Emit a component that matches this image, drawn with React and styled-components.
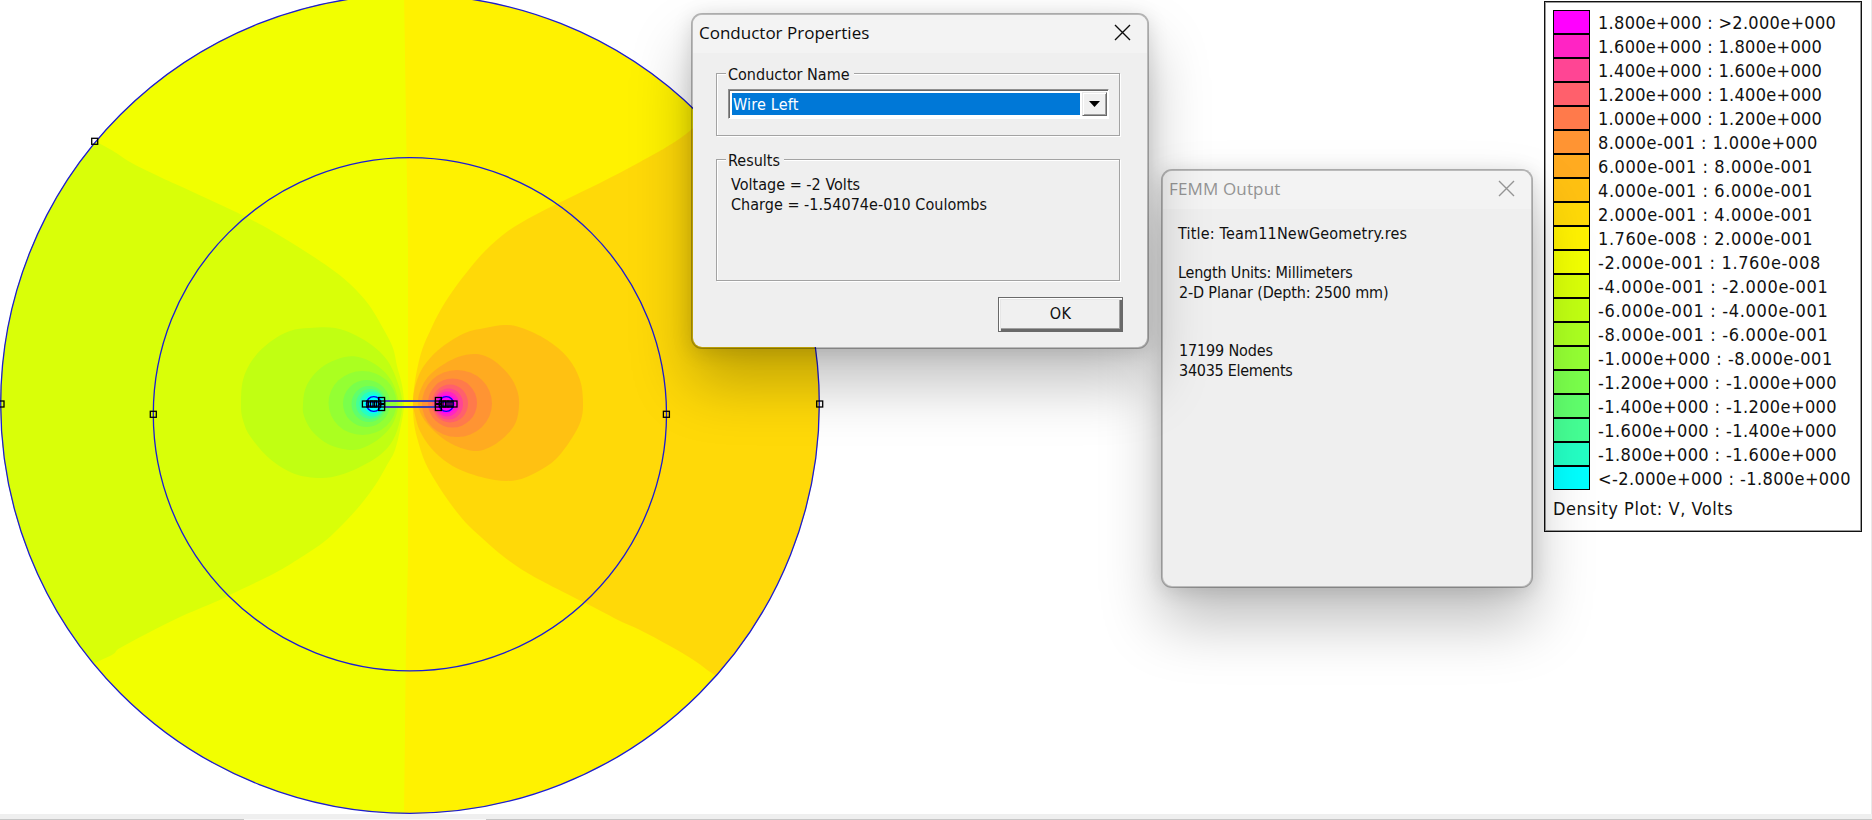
import React from "react";
import styled, { createGlobalStyle } from "styled-components";

const GlobalStyle = createGlobalStyle`
  * { box-sizing: border-box; }
  body { margin: 0; background: #fff; overflow: hidden; }
`;

const ui = '"DejaVu Sans Condensed", "DejaVu Sans", sans-serif';

/* ---------- page ---------- */

const Page = styled.div`
  position: relative;
  display: flex;
  flex-direction: column;
  width: 1872px;
  height: 820px;
  overflow: hidden;
  background: #fff;
  color: #111;
  font: 16px ${ui};
`;

const Workspace = styled.main`
  display: flex;
  justify-content: space-between;
  align-items: flex-start;
  height: 814px;
  border-right: 1px solid #e9e9e9;
`;

const Plot = styled.svg`
  display: block;
  flex: none;
`;

const StatusStrip = styled.footer`
  display: flex;
  height: 6px;
  background: #efefef;
`;

const StripSegment = styled.div`
  flex: ${(p) => (p.$width ? `0 0 ${p.$width}px` : "1")};
  border-bottom: 1px solid ${(p) => (p.$gap ? "#f8f8f8" : "#c6c6c6")};
`;

/* ---------- legend ---------- */

const LegendPanel = styled.aside`
  width: 318px;
  height: 531px;
  margin: 1px 9px 0 0;
  padding: 8px 0 0 8px;
  border: 1px solid #111;
  box-shadow: inset 0 0 0 1px #9a9a9a;
  background: #fff;
  font-size: 18px;
`;

const LegendRow = styled.div`
  display: flex;
  align-items: center;
  height: 24px;
  white-space: pre;
`;

const Swatch = styled.span`
  flex: none;
  width: 37px;
  height: 24px;
  margin-right: 8px;
  border: 1px solid #000;
  background: ${(p) => p.$color};
`;

const RangeText = styled.span`
  letter-spacing: ${(p) => p.$spacing}px;
`;

const LegendTitle = styled.div`
  margin-top: 7px;
  line-height: 24px;
  letter-spacing: 0.55px;
`;

/* ---------- windows ---------- */

const Window = styled.section`
  position: absolute;
  left: ${(p) => p.$x}px;
  top: ${(p) => p.$y}px;
  width: ${(p) => p.$w}px;
  height: ${(p) => p.$h}px;
  display: flex;
  flex-direction: column;
  border: 2px solid rgba(0, 0, 0, 0.27);
  border-radius: 11px;
  background: #efefef;
  background-clip: padding-box;
  box-shadow: 0 34px 60px rgba(0, 0, 0, 0.25), 0 3px 20px rgba(0, 0, 0, 0.13);
`;

const TitleBar = styled.header`
  flex: none;
  display: flex;
  align-items: center;
  justify-content: space-between;
  height: 38px;
  padding: 0 16px 4px 6px;
  border-radius: 9px 9px 0 0;
  background: #f3f3f3;
  color: ${(p) => (p.$inactive ? "#949494" : "#0c0c0c")};
  font: 17px "Open Sans", "Noto Sans", sans-serif;
  letter-spacing: ${(p) => (p.$inactive ? 0.15 : 0)}px;
`;

const CloseIcon = styled.svg`
  width: 17px;
  height: 17px;
  fill: none;
  stroke: currentColor;
  stroke-width: 1.4;
`;

const DialogBody = styled.div`
  display: flex;
  flex-direction: column;
  padding: 20px 27px 0 23px;
`;

const Group = styled.fieldset`
  position: relative;
  min-width: 0;
  width: 404px;
  height: ${(p) => p.$h}px;
  margin: 0 0 ${(p) => p.$gap}px;
  padding: ${(p) => p.$pad};
  border: 1px solid #a3a3a3;
  box-shadow: 1px 1px 0 #fff, inset 1px 1px 0 #fff;
`;

const GroupLabel = styled.span`
  position: absolute;
  top: -10px;
  left: 9px;
  padding: 0 4px 0 2px;
  background: #efefef;
  line-height: 21px;
  white-space: nowrap;
`;

const Combo = styled.div`
  display: flex;
  width: 381px;
  height: 30px;
  padding: 2px 1px 2px 2px;
  border: 1px solid;
  border-color: #8f8f8f #fff #fff #8f8f8f;
  box-shadow: inset 1px 1px 0 #6a6a6a;
  background: #fff;
`;

const ComboValue = styled.span`
  flex: 1;
  margin: 1px 2px 1px 1px;
  padding-left: 1px;
  background: #0078d7;
  color: #fff;
  line-height: 24px;
  letter-spacing: 0.2px;
`;

const ComboButton = styled.button`
  display: flex;
  align-items: center;
  justify-content: center;
  width: 25px;
  padding: 0;
  border: 1px solid;
  border-color: #e8e8e8 #696969 #696969 #e8e8e8;
  box-shadow: inset 1px 1px 0 #fff, inset -1px -1px 0 #a0a0a0;
  background: #f0f0f0;
`;

const ResultLine = styled.div`
  line-height: 19.6px;
  letter-spacing: 0.03px;
  white-space: nowrap;
`;

const OkButton = styled.button`
  align-self: flex-end;
  width: 125px;
  height: 35px;
  margin-right: -3px;
  padding: 0 0 2px;
  border: 1px solid #696969;
  box-shadow: inset 1px 1px 0 #fff, inset 2px 2px 0 #e6e6e6, inset -2px -2px 0 #696969,
    inset -3px -3px 0 #a0a0a0;
  background: #f0f0f0;
  color: #111;
  font: 16px ${ui};
  letter-spacing: 0.4px;
`;

const OutputBody = styled.div`
  padding: 15px 15px 0;
`;

const OutputLine = styled.div`
  height: 19.5px;
  padding-left: ${(p) => p.$indent || 0}px;
  line-height: 19.5px;
  letter-spacing: ${(p) => p.$spacing || 0}px;
  white-space: nowrap;
`;

/* ---------- data ---------- */

const legend = [
  ["#ff00ff", "1.800e+000 : >2.000e+000"],
  ["#ff24c4", "1.600e+000 : 1.800e+000"],
  ["#ff4594", "1.400e+000 : 1.600e+000"],
  ["#ff606c", "1.200e+000 : 1.400e+000"],
  ["#ff7a4b", "1.000e+000 : 1.200e+000"],
  ["#ff9433", "8.000e-001 : 1.000e+000"],
  ["#ffab20", "6.000e-001 : 8.000e-001"],
  ["#ffc112", "4.000e-001 : 6.000e-001"],
  ["#ffd908", "2.000e-001 : 4.000e-001"],
  ["#fff200", "1.760e-008 : 2.000e-001"],
  ["#f2ff00", "-2.000e-001 : 1.760e-008"],
  ["#d9ff08", "-4.000e-001 : -2.000e-001"],
  ["#c1ff12", "-6.000e-001 : -4.000e-001"],
  ["#abff20", "-8.000e-001 : -6.000e-001"],
  ["#94ff33", "-1.000e+000 : -8.000e-001"],
  ["#7aff4b", "-1.200e+000 : -1.000e+000"],
  ["#60ff6c", "-1.400e+000 : -1.200e+000"],
  ["#45ff94", "-1.600e+000 : -1.400e+000"],
  ["#24ffc4", "-1.800e+000 : -1.600e+000"],
  ["#00ffff", "<-2.000e+000 : -1.800e+000"],
];

const spacingFor = (text) => {
  const exponents = (text.match(/e-/g) || []).length;
  const signs = (text.match(/-/g) || []).length - exponents;
  return 0.3 + 0.14 * exponents + 0.05 * signs;
};

const contours = [
  {
    color: "#d9ff08",
    points: [[95,141],[130,162],[160,177],[195,193],[240,214],[272,231],[303,250],[330,268],[350,284],[369,305],[384,330],[393,348],[397,366],[402,385],[404,405],[401,425],[395,450],[387,465],[376,484],[362,503],[345,522],[325,541],[300,558],[275,573],[240,590],[215,602],[180,617],[148,633],[120,648],[94,663],[-60,720],[-60,60]],
  },
  {
    color: "#ffd908",
    points: [[715,675],[695,661],[670,646],[640,630],[620,621],[597,609],[575,598],[540,580],[518,567],[499,553],[482,538],[466,523],[450,503],[436,482],[425,462],[418,441],[414,423],[413,400],[416,375],[422,350],[431,329],[440,311],[452,292],[467,272],[485,251],[508,231],[535,215],[565,200],[600,183],[640,162],[682,137],[760,80],[900,60],[900,740],[760,700]],
  },
  {
    color: "#c1ff12",
    points: [[241,405],[243,380],[253,359],[270,342],[290,331],[310,328],[335,328],[355,335],[373,346],[387,360],[396,378],[402,400],[400,420],[393,440],[380,455],[360,467],[340,475],[320,478],[295,474],[270,459],[250,436],[243,420]],
  },
  {
    color: "#abff20",
    points: [[303,405],[305,390],[312,377],[325,365],[345,357],[362,358],[379,367],[391,380],[397,395],[398,408],[392,425],[380,438],[365,447],[350,450],[328,444],[312,431],[304,416]],
  },
  {
    color: "#ffc112",
    points: [[413,400],[417,380],[426,363],[442,347],[465,333],[485,328],[505,325],[522,328],[547,340],[568,358],[580,380],[583,402],[581,420],[572,438],[556,459],[537,472],[517,480],[495,480],[468,473],[448,463],[431,448],[420,431],[415,415]],
  },
  {
    color: "#ffab20",
    points: [[418,400],[425,381],[438,368],[458,357],[477,354],[493,360],[509,375],[517,390],[519,405],[515,424],[501,440],[483,450],[468,450],[450,443],[434,431],[422,416]],
  },
];

const rings = [
  ["#94ff33", 362.5, 403, 34, 32],
  ["#7aff4b", 366.5, 403.5, 23.5, 23.5],
  ["#60ff6c", 369, 404, 17.5, 18],
  ["#45ff94", 370.5, 404, 14.5, 15],
  ["#24ffc4", 372, 404, 12.5, 12.5],
  ["#00ffff", 373.5, 404, 9.5, 9.5],
  ["#ff9433", 457, 403.5, 35, 33.5],
  ["#ff7a4b", 452.5, 403, 24.5, 24.5],
  ["#ff606c", 450, 403.5, 18, 19],
  ["#ff4594", 448.5, 404, 14.5, 15.5],
  ["#ff24c4", 447, 404, 12, 12.5],
  ["#ff00ff", 446, 404, 9.5, 9.5],
];

const boundaryNodes = [[94.7, 141.3], [1, 404], [153.3, 414.3], [666.4, 414.3], [819.7, 404]];
const wireNodes = [
  [365.4, 404], [370, 404], [373.5, 404], [377.5, 404], [381.6, 400.5], [381.6, 404], [381.6, 407.5],
  [454, 404], [450, 404], [446, 404], [442.5, 404], [438.4, 400.5], [438.4, 404], [438.4, 407.5],
];

/* Closed Catmull-Rom curve through the points, written as cubic segments. */
const smoothPath = (pts) => {
  const n = pts.length;
  const at = (i) => pts[(i + n) % n];
  let d = `M${pts[0]}`;
  for (let i = 0; i < n; i++) {
    const [p0, p1, p2, p3] = [at(i - 1), at(i), at(i + 1), at(i + 2)];
    const a = [0, 1].map((k) => p1[k] + (p2[k] - p0[k]) / 6);
    const b = [0, 1].map((k) => p2[k] - (p3[k] - p1[k]) / 6);
    d += `C${a} ${b} ${p2}`;
  }
  return `${d}Z`;
};

/* ---------- pieces ---------- */

function NodeMark({ at: [x, y], size = 6 }) {
  return (
    <rect x={x - size / 2} y={y - size / 2} width={size} height={size} fill="none" stroke="#000" strokeWidth="1.3" />
  );
}

function FieldPlot() {
  return (
    <Plot width="840" height="814" viewBox="0 0 840 814">
      <defs>
        <clipPath id="domain">
          <circle cx="410" cy="404" r="409.5" />
        </clipPath>
      </defs>
      <g clipPath="url(#domain)">
        <rect width="840" height="820" fill="#fff200" />
        <path d="M0-10H404L406 120L408 250V560L406 640L404 820H0Z" fill="#f2ff00" />
        {contours.map((c) => (
          <path key={c.color} d={smoothPath(c.points)} fill={c.color} />
        ))}
        {rings.map(([color, cx, cy, rx, ry]) => (
          <ellipse key={color} cx={cx} cy={cy} rx={rx} ry={ry} fill={color} />
        ))}
      </g>
      <g fill="none" stroke="#1c1cd4" strokeWidth="1.3">
        <circle cx="410" cy="404" r="409.3" />
        <circle cx="409.9" cy="414.3" r="256.6" />
      </g>
      <path d="M385 401H435M385 407H435" stroke="#3c3cb4" strokeWidth="1.9" />
      <g fill="none" stroke="#0000f0" strokeWidth="1.4">
        <circle cx="373.8" cy="404" r="7.4" />
        <circle cx="446.2" cy="404" r="7.4" />
        <path d="M367 402H381M367 406H381M439 402H453M439 406H453" />
      </g>
      {boundaryNodes.map((n) => <NodeMark key={n.join()} at={n} />)}
      {wireNodes.map((n) => <NodeMark key={n.join()} at={n} />)}
    </Plot>
  );
}

function Close() {
  return (
    <CloseIcon viewBox="0 0 17 17">
      <path d="M1 1L16 16M16 1L1 16" />
    </CloseIcon>
  );
}

function Legend() {
  return (
    <LegendPanel>
      {legend.map(([color, text]) => (
        <LegendRow key={color}>
          <Swatch $color={color} />
          <RangeText $spacing={spacingFor(text)}>{text}</RangeText>
        </LegendRow>
      ))}
      <LegendTitle>Density Plot: V, Volts</LegendTitle>
    </LegendPanel>
  );
}

function OutputWindow() {
  return (
    <Window $x={1161} $y={169} $w={372} $h={419}>
      <TitleBar $inactive>
        FEMM Output
        <Close />
      </TitleBar>
      <OutputBody>
        <OutputLine $spacing={0.2}>Title: Team11NewGeometry.res</OutputLine>
        <OutputLine />
        <OutputLine $spacing={-0.2}>Length Units: Millimeters</OutputLine>
        <OutputLine $indent={1} $spacing={-0.16}>2-D Planar (Depth: 2500 mm)</OutputLine>
        <OutputLine />
        <OutputLine />
        <OutputLine $indent={1} $spacing={-0.15}>17199 Nodes</OutputLine>
        <OutputLine $indent={1} $spacing={-0.28}>34035 Elements</OutputLine>
      </OutputBody>
    </Window>
  );
}

function ConductorDialog() {
  return (
    <Window $x={691} $y={13} $w={458} $h={336}>
      <TitleBar>
        Conductor Properties
        <Close />
      </TitleBar>
      <DialogBody>
        <Group $h={63} $gap={23} $pad="15px 0 0 11px">
          <GroupLabel>Conductor Name</GroupLabel>
          <Combo>
            <ComboValue>Wire Left</ComboValue>
            <ComboButton aria-label="Open list">
              <svg width="11" height="6" viewBox="0 0 11 6"><path d="M0 0H11L5.5 6Z" fill="#000" /></svg>
            </ComboButton>
          </Combo>
        </Group>
        <Group $h={122} $gap={16} $pad="15px 0 0 14px">
          <GroupLabel>Results</GroupLabel>
          <ResultLine>Voltage = -2 Volts</ResultLine>
          <ResultLine>Charge = -1.54074e-010 Coulombs</ResultLine>
        </Group>
        <OkButton>OK</OkButton>
      </DialogBody>
    </Window>
  );
}

export default function App() {
  return (
    <Page>
      <GlobalStyle />
      <Workspace>
        <FieldPlot />
        <Legend />
      </Workspace>
      <StatusStrip>
        <StripSegment $width={244} />
        <StripSegment $width={242} $gap />
        <StripSegment />
      </StatusStrip>
      <OutputWindow />
      <ConductorDialog />
    </Page>
  );
}
